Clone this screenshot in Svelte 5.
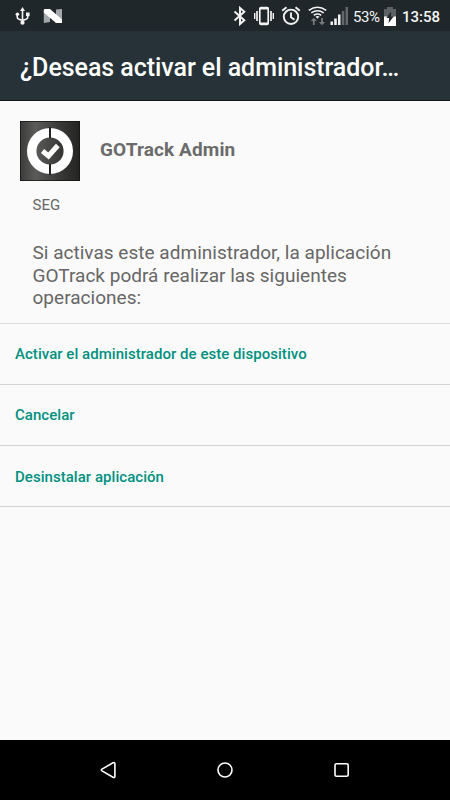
<script lang="ts">
    const title: string = '¿Deseas activar el administrador…';
    const actions: string[] = [
        'Activar el administrador de este dispositivo',
        'Cancelar',
        'Desinstalar aplicación',
    ];
</script>

<div class="screen">
    <div class="status">
        <svg class="usb" width="16" height="20" viewBox="0 0 16 20" fill="none" stroke="#f2f2f2" stroke-width="1.6">
            <path d="M7.5 4v12M2.2 9v2q0 2.5 5.3 3.2M12.8 8v3q0 2.5-5.3 3.2" />
            <path d="M7.5 1 10 5H5z" fill="#f2f2f2" stroke="none" />
            <circle cx="7.5" cy="16.7" r="2.1" fill="#f2f2f2" stroke="none" />
            <circle cx="2.4" cy="8.3" r="1.8" fill="#f2f2f2" stroke="none" />
            <path d="M11 6.5h3.6v3.6H11z" fill="#f2f2f2" stroke="none" />
        </svg>
        <svg class="nougat" width="20" height="16" viewBox="0 0 20 16">
            <path d="M.8 2.5 7 5v9L.8 15zM19 1l-6 .5v9l6 4.500z" fill="#a5a8aa" />
            <path d="M1.500 1h5.500L19 11.500V15h-6L.8 4.500V2z" fill="#fff" />
        </svg>
        <span class="spacer"></span>
        <svg class="bluetooth" width="14" height="20" viewBox="0 0 14 20" fill="none" stroke="#f2f2f2" stroke-width="2">
            <path d="M1.500 5.500 11.300 14.200 7 18V2l4.300 3.800L1.500 14.500" />
        </svg>
        <svg class="vibrate" width="20" height="20" viewBox="0 0 20 20" fill="none" stroke="#f2f2f2">
            <rect x="5.800" y="1.700" width="8.400" height="16.600" rx="1.200" stroke-width="1.700" />
            <path d="M5.500 2.500h9M5.500 17.500h9" stroke-width="2" />
            <path d="M3 5v10M17 5v10" stroke-width="1.700" />
            <path d="M.7 7v6M19.300 7v6" stroke-width="1.400" />
        </svg>
        <svg class="alarm" width="20" height="20" viewBox="0 0 20 20" fill="none" stroke="#f2f2f2" stroke-width="1.900">
            <circle cx="10" cy="10.800" r="7.200" />
            <path d="M10 6.500v4.700l3.500 2.500M1.200 4.800 5.500 1.200M18.800 4.800 14.500 1.200" />
        </svg>
        <svg class="wifi" width="20" height="20" viewBox="0 0 20 20" fill="none">
            <path d="M.8 4.300q8.700-6.200 17.400 0M3.300 6.900q6.200-4.400 12.400 0M5.800 9.300q3.700-2.600 7.400 0" stroke="#f2f2f2" stroke-width="1.600" />
            <path d="M7.500 10.600q2-1.100 4 0l-2 2.100z" fill="#f2f2f2" />
            <path d="m5.800 11.800 3.100 3.200H6.700v4H4.900v-4H2.700zM14 19.200l3.100-3.200h-2.200v-4h-1.800v4h-2.200z" fill="#757b7f" />
        </svg>
        <svg class="signal" width="19" height="18" viewBox="0 0 19 18">
            <path d="M.5 14.500h2.500V18H.5zM4.200 11.500h2.600V18H4.200z" fill="#f2f2f2" />
            <path d="M8 7.500h2.500V18H8z" fill="#f2f2f2" />
            <path d="M11.800 4h2.500v14h-2.500zM15.500 0H18v18h-2.500z" fill="#62686c" />
        </svg>
        <span class="percent">53%</span>
        <svg class="battery" width="12" height="19" viewBox="0 0 12 19">
            <path d="M0 2h3V0h6v2h3v8H0z" fill="#5c6165" />
            <path d="M0 9.500h12V19H0z" fill="#fff" />
            <path d="M7.200 4.500 2.300 11h2.900L4.500 16.200 9.800 9.300H6.900z" fill="#20272b" />
        </svg>
        <span class="clock">13:58</span>
    </div>

    <header>
        <h1>{title}</h1>
    </header>

    <main>
        <div class="app">
            <svg width="60" height="60" viewBox="0 0 60 60">
                <defs>
                    <linearGradient id="metal">
                        <stop offset="0" stop-color="#3c3c3a" />
                        <stop offset="0.25" stop-color="#5b5b59" />
                        <stop offset="0.65" stop-color="#3a3a38" />
                        <stop offset="1" stop-color="#242423" />
                    </linearGradient>
                </defs>
                <rect width="60" height="60" fill="#111" />
                <rect x="0.700" y="0.700" width="58.600" height="58.600" fill="url(#metal)" />
                <circle cx="30" cy="30" r="18.300" fill="none" stroke="#fff" stroke-width="9.400" />
                <path d="M30 6v11M30 43v11" stroke="#222" stroke-width="2" />
                <path d="m22.500 30 6 5L37.800 24.500" fill="none" stroke="#fff" stroke-width="5" />
            </svg>
            <h2>GOTrack Admin</h2>
        </div>
        <p class="note">SEG</p>
        <p class="warning">Si activas este administrador, la aplicación GOTrack podrá realizar las siguientes operaciones:</p>
        <div class="actions">
            {#each actions as action}
                <button>{action}</button>
            {/each}
        </div>
    </main>

    <nav>
        <svg width="18" height="18" viewBox="0 0 18 18">
            <path d="M3 8.100 14 1.800q1.900-.8 1.900 1v12.400q0 1.800-1.900 1L3 9.900q-1.400-.9 0-1.800z" />
        </svg>
        <svg width="18" height="18" viewBox="0 0 18 18">
            <circle cx="9" cy="9" r="7" />
        </svg>
        <svg width="18" height="18" viewBox="0 0 18 18">
            <rect x="2" y="2.700" width="13.200" height="12.600" rx="1.500" />
        </svg>
    </nav>
</div>

<style>
    :global(body) {
        margin: 0;
    }
    .screen {
        display: flex;
        flex-direction: column;
        width: 450px;
        height: 800px;
        overflow: hidden;
        background: #fafafa;
        font-family: Roboto, sans-serif;
    }
    svg {
        display: block;
        flex: none;
    }
    .status {
        display: flex;
        align-items: center;
        box-sizing: border-box;
        height: 31px;
        padding: 1px 10px 0 15px;
        background: #20272b;
        color: #f5f5f5;
    }
    .nougat {
        margin-left: 12px;
    }
    .spacer {
        flex: 1;
    }
    .vibrate {
        margin-left: 7px;
    }
    .alarm {
        margin-left: 7px;
    }
    .wifi {
        margin-left: 7px;
    }
    .signal {
        margin-left: 2px;
    }
    .percent {
        width: 28px;
        margin-left: 4px;
        padding-top: 1px;
        font-size: 15px;
        letter-spacing: -0.4px;
    }
    .battery {
        margin-left: 3px;
    }
    .clock {
        width: 38px;
        margin-left: 6px;
        padding-top: 1px;
        font-size: 15px;
        font-weight: 500;
    }
    header {
        display: flex;
        align-items: center;
        box-sizing: border-box;
        height: 70px;
        padding: 4px 20px 0;
        background: #263238;
        border-bottom: 1px solid #10151a;
    }
    h1 {
        margin: 0;
        color: #fff;
        font-size: 25px;
        font-weight: 500;
        letter-spacing: -0.05px;
        white-space: nowrap;
    }
    main {
        flex: 1;
    }
    .app {
        display: flex;
        align-items: center;
        gap: 20px;
        padding: 20px 20px 0;
    }
    h2 {
        margin: 0 0 4px;
        color: #6b6b6b;
        font-size: 19px;
        font-weight: 700;
        letter-spacing: 0.12px;
    }
    .note {
        margin: 15px 32.5px 0;
        color: #666;
        font-size: 15px;
        line-height: 18px;
    }
    .warning {
        width: 380px;
        margin: 28px 0 0 32.5px;
        color: #666;
        font-size: 19px;
        line-height: 22.7px;
        letter-spacing: 0.02px;
    }
    .actions {
        margin-top: 12.5px;
        border-top: 1px solid #dadada;
    }
    button {
        display: block;
        box-sizing: border-box;
        width: 100%;
        height: 61.2px;
        padding: 1px 15px 0;
        border: 0;
        border-bottom: 1px solid #d5d5d5;
        background: none;
        color: #009080;
        font: 500 15px Roboto, sans-serif;
        letter-spacing: 0.04px;
        text-align: left;
    }
    nav {
        display: flex;
        align-items: center;
        justify-content: center;
        gap: 99px;
        height: 60px;
        background: #000;
    }
    nav svg {
        fill: none;
        stroke: #fff;
        stroke-width: 1.6;
    }
</style>
